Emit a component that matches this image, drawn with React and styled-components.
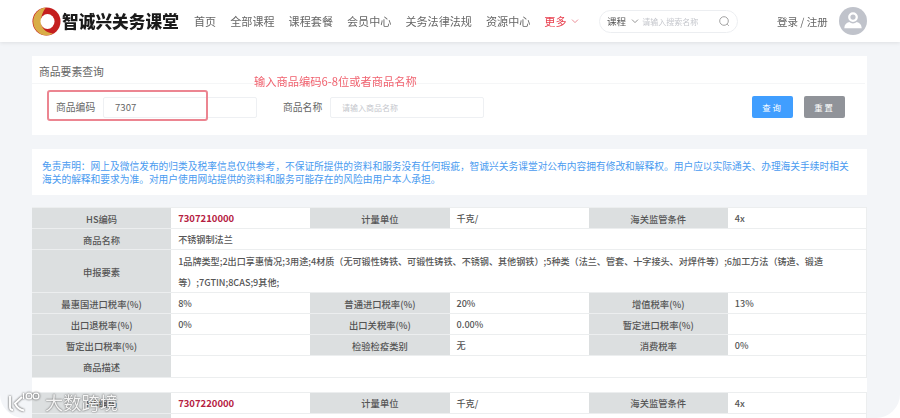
import React from "react";
import styled, { createGlobalStyle } from "styled-components";

const Global = createGlobalStyle`
  html, body { margin: 0; padding: 0; background: #f3f5f8; }
  body { font-family: "Noto Sans CJK SC", "Noto Sans", sans-serif; }
`;
const Page = styled.div`
  position: relative; width: 900px; height: 418px; overflow: hidden; background: #f3f5f8;
`;
const Blurred = styled.div`filter: blur(0.35px);`;
const Header = styled.header`
  height: 42px; background: #fff; box-shadow: 0 1px 4px rgba(0,0,0,.09);
  display: flex; align-items: center; padding: 0 33px 0 32px; position: relative;
`;
const LogoBox = styled.div`display: flex; align-items: center; gap: 1px; width: 162px; flex: none;`;
const LogoText = styled.span`
  font-family: "Noto Sans CJK SC", sans-serif; font-weight: 900; font-size: 16.6px; letter-spacing: .1px; color: #1a1a1a; white-space: nowrap;
`;
const Nav = styled.nav`display: flex; gap: 14px; align-items: center; width: 405px; flex: none;`;
const NavItem = styled.a`
  font-size: 11.1px; color: ${p => p.$active ? "#e8404f" : "#666"}; white-space: nowrap; display: flex; align-items: center; gap: 4px;
`;
const Search = styled.div`
  width: 139px; height: 23px; box-sizing: border-box; border: 1px solid #eceef1; border-radius: 12px;
  display: flex; align-items: center; padding: 0 7px; flex: none; margin-right: 39px;
`;
const SearchType = styled.span`font-size: 9.6px; color: #555; margin-right: 5px; white-space: nowrap;`;
const SearchHint = styled.span`font-size: 8px; color: #c4c6cc; margin-left: 3px; white-space: nowrap; flex: 1;`;
const Login = styled.span`font-size: 10.5px; color: #666; width: 62px; white-space: nowrap; flex: none;`;
const Avatar = styled.div`
  width: 28px; height: 28px; border-radius: 50%; background: #c0c3cb; flex: none; overflow: hidden;
`;
const Main = styled.main`padding: 14px 33px 0 32px; display: flex; flex-direction: column;`;
const Panel = styled.section`background: #fff; height: 79px; position: relative;`;
const PanelTitle = styled.div`
  height: 28px; box-sizing: border-box; padding: 8px 7px 0; font-size: 10.8px; line-height: 15px; color: #666; border-bottom: 1px solid #f5f6f7; margin-right: 2px;
`;
const Form = styled.div`display: flex; align-items: center; padding: 12px 22px 0 24px;`;
const FieldLabel = styled.label`font-size: 9.8px; color: #666; width: 47px; flex: none; white-space: nowrap;`;
const Input = styled.div`
  width: 154px; height: 21px; box-sizing: border-box; border: 1px solid #eef0f3; border-radius: 2px; flex: none;
  display: flex; align-items: center; padding-left: 11px;
  font-size: ${p => p.$filled ? "9.6px" : "8px"}; color: ${p => p.$filled ? "#666" : "#c4c6cc"}; margin-right: 26px;
`;
const Spacer = styled.div`flex: 1;`;
const Btn = styled.button`
  width: 41px; height: 22px; border: 0; border-radius: 2px; background: ${p => p.$bg}; color: #fff; font-size: 8.4px; letter-spacing: 2px; padding: 0; margin-left: ${p => p.$ml || 0}px; font-family: inherit;
`;
const RedBox = styled.div`
  position: absolute; left: 15px; top: 34px; width: 161px; height: 31px; box-sizing: border-box; border: 2px solid #ec8591; border-radius: 3px;
`;
const Note = styled.div`
  position: absolute; left: 222px; top: 17px; font-size: 11.25px; line-height: 16px; color: #f0626f; white-space: nowrap;
`;
const Notice = styled.section`
  background: #fff; margin-top: 14px; height: 46px; box-sizing: border-box; padding: 11px 0 0 10px; font-size: 9.73px; line-height: 13px; color: #4a9bf0; white-space: nowrap;
`;
const TableWrap = styled.section`background: #fff; margin-top: 12px; display: flex; flex-direction: column; gap: 14px;`;
const Grid = styled.div`display: grid; grid-template-columns: repeat(6, 1fr); border-top: 1px solid #eceeef;`;
const Label = styled.div`
  background: #dcdfe0; color: #555; font-size: 9.3px; font-weight: 500; display: flex; align-items: center; justify-content: center;
  height: ${p => p.$h || 21.1}px; box-sizing: border-box; padding-top: 1px; border-bottom: 1px solid #eceeef; white-space: nowrap;
`;
const Value = styled.div`
  grid-column: span ${p => p.$span || 1}; height: ${p => p.$h || 21.1}px; box-sizing: border-box; padding: 1px 7px 0;
  display: flex; align-items: center; color: ${p => p.$red ? "#b5203f" : "#555"}; font-size: ${p => p.$red ? "9.5px" : "9.1px"}; font-weight: ${p => p.$red ? 700 : 500};
  border-bottom: 1px solid #eceeef; border-right: ${p => p.$last ? "1px solid #eceeef" : 0}; line-height: 21px; white-space: nowrap;
`;
const Corners = styled.div`
  position: absolute; inset: 0; border-radius: 24px; box-shadow: 0 0 0 30px #fff; pointer-events: none;
`;
const Mark = styled.div`
  position: absolute; left: 8px; bottom: 4px; display: flex; align-items: center; gap: 4px; color: rgba(255,255,255,.92);
  font-size: 18.2px; line-height: 24px; font-weight: 400; text-shadow: 0 0 2px rgba(70,70,70,.75), 0 0 1px rgba(70,70,70,.6); letter-spacing: .1px;
`;

const Logo = () => (
  <svg width="29" height="29" viewBox="0 0 29 29">
    <circle cx="14.5" cy="14.5" r="14" fill="#c41f1f"/>
    <path d="M14 .6A14 14 0 0 0 14 28.5 14 14 0 0 0 21 26.5C14 26 9 21 9 14.5 9 8 12 3 14 .6Z" fill="#d9ad48"/>
    <ellipse cx="15.5" cy="14.5" rx="7" ry="7.6" fill="#fff"/>
  </svg>
);
const Chevron = ({ color = "#999", size = 8 }) => (
  <svg width={size} height={size} viewBox="0 0 8 8" fill="none" stroke={color} strokeWidth=".9"><path d="M1 2.6 4 5.6 7 2.6"/></svg>
);
const SearchIcon = () => (
  <svg width="11" height="11" viewBox="0 0 11 11" fill="none" stroke="#999" strokeWidth=".9"><circle cx="5" cy="5" r="4.3"/><path d="M8.2 8.2 9.8 9.8"/></svg>
);
const User = () => (
  <svg width="28" height="28" viewBox="0 0 28 28" fill="#fff">
    <path fillRule="evenodd" d="M14 5.200a4.900 4.900 0 1 1 0 9.800 4.900 4.900 0 0 1 0-9.800Zm0 2.300a2.600 2.600 0 1 0 0 5.200 2.600 2.600 0 0 0 0-5.200Z"/>
    <path d="M10.300 15c1 .9 2.300 1.400 3.700 1.400s2.700-.5 3.700-1.400c2.900.8 4.900 2.500 5 6.200H5.300c.1-3.700 2.100-5.400 5-6.200Z"/>
  </svg>
);
const MarkLogo = () => (
  <svg width="33" height="22" viewBox="0 0 33 22" fill="none" stroke="#fff" strokeWidth="1.900" style={{ filter: "drop-shadow(0 0 1.2px rgba(50,50,50,.95))" }}>
    <path d="M2 5v11c0 2 1 3 3 3"/>
    <path d="M14 6 7 12.500c2 4 5 6.500 9 7"/>
    <path d="M15.500 2v6" strokeWidth="1.300"/>
    <circle cx="21" cy="5" r="2.900" strokeWidth="1.300"/>
    <circle cx="28" cy="5" r="2.900" strokeWidth="1.300"/>
  </svg>
);

const Row = ({ cells }) => (
  <>
    <Label>{cells[0]}</Label><Value $red={cells[6]}>{cells[1]}</Value>
    <Label>{cells[2]}</Label><Value>{cells[3]}</Value>
    <Label>{cells[4]}</Label><Value $last>{cells[5]}</Value>
  </>
);

export default function App() {
  return (
    <Page>
      <Global />
      <Blurred>
        <Header>
          <LogoBox><Logo /><LogoText>智诚兴关务课堂</LogoText></LogoBox>
          <Nav>
            <NavItem>首页</NavItem>
            <NavItem>全部课程</NavItem>
            <NavItem>课程套餐</NavItem>
            <NavItem>会员中心</NavItem>
            <NavItem>关务法律法规</NavItem>
            <NavItem>资源中心</NavItem>
            <NavItem $active>更多<Chevron color="#e8808a" /></NavItem>
          </Nav>
          <Search>
            <SearchType>课程</SearchType><Chevron color="#888" />
            <SearchHint>请输入搜索名称</SearchHint><SearchIcon />
          </Search>
          <Login>登录 / 注册</Login>
          <Avatar><User /></Avatar>
        </Header>
        <Main>
          <Panel>
            <PanelTitle>商品要素查询</PanelTitle>
            <Form>
              <FieldLabel>商品编码</FieldLabel>
              <Input $filled>7307</Input>
              <FieldLabel>商品名称</FieldLabel>
              <Input>请输入商品名称</Input>
              <Spacer />
              <Btn $bg="#409eff">查询</Btn>
              <Btn $bg="#909399" $ml={11}>重置</Btn>
            </Form>
            <RedBox />
            <Note>输入商品编码6-8位或者商品名称</Note>
          </Panel>
          <Notice>
            免责声明：网上及微信发布的归类及税率信息仅供参考，不保证所提供的资料和服务没有任何瑕疵，智诚兴关务课堂对公布内容拥有修改和解释权。用户应以实际通关、办理海关手续时相关<br />
            海关的解释和要求为准。对用户使用网站提供的资料和服务可能存在的风险由用户本人承担。
          </Notice>
          <TableWrap>
            <Grid>
              <Row cells={["HS编码", "7307210000", "计量单位", "千克/", "海关监管条件", "4x", true]} />
              <Label>商品名称</Label><Value $span={5} $last>不锈钢制法兰</Value>
              <Label $h={43}>申报要素</Label>
              <Value $span={5} $h={43} $last>
                <div>1品牌类型;2出口享惠情况;3用途;4材质（无可锻性铸铁、可锻性铸铁、不锈钢、其他钢铁）;5种类（法兰、管套、十字接头、对焊件等）;6加工方法（铸造、锻造<br />等）;7GTIN;8CAS;9其他;</div>
              </Value>
              <Row cells={["最惠国进口税率(%)", "8%", "普通进口税率(%)", "20%", "增值税率(%)", "13%"]} />
              <Row cells={["出口退税率(%)", "0%", "出口关税率(%)", "0.00%", "暂定进口税率(%)", ""]} />
              <Row cells={["暂定出口税率(%)", "", "检验检疫类别", "无", "消费税率", "0%"]} />
              <Label>商品描述</Label><Value $span={5} $last></Value>
            </Grid>
            <Grid>
              <Row cells={["HS编码", "7307220000", "计量单位", "千克/", "海关监管条件", "4x", true]} />
              <Label /><Value $span={5} $last />
            </Grid>
          </TableWrap>
        </Main>
      </Blurred>
      <Corners />
      <Mark><MarkLogo /><span>大数跨境</span></Mark>
    </Page>
  );
}
